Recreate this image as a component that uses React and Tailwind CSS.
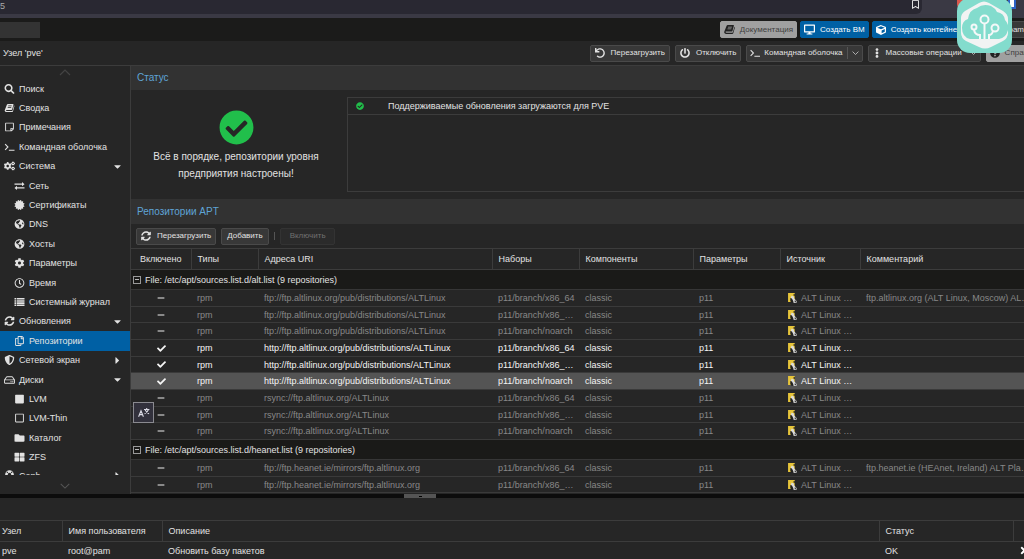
import React from "react";
import {
  FaSearch, FaRegStickyNote, FaCogs, FaCertificate, FaGlobeAmericas, FaCog, FaRegClock,
  FaSyncAlt, FaRegCopy, FaShieldAlt, FaRegHdd, FaSquare, FaRegSquare, FaFolder, FaThLarge,
  FaCheckCircle, FaCheck, FaMinus, FaUndo, FaPowerOff, FaDesktop, FaCube, FaEllipsisV,
  FaCaretDown, FaCaretRight, FaQuestionCircle, FaRegBookmark, FaLifeRing, FaUser, FaTimes,
} from "react-icons/fa";

const Book = ({ className }) => (
  <svg viewBox="0 0 16 16" className={className} width="1em" height="1em" fill="currentColor">
    <path
      fillRule="evenodd"
      d="M5.500 1.500h8q1.200 0 .9 1.200L12.300 10q-.3 1-1.300 1H2.800q-.8.200-.4 1 .3.600 1.200.6H12q.7 0 .9-.6l2.300-8q.8.500.6 1.300L13.600 13q-.4 1.500-1.800 1.500H3Q.8 14.500.3 12.500q-.1-.8.2-1.500L3.800 2.700q.5-1.200 1.700-1.200zM6 4l-.3 1h5.600l.3-1zM5.300 6.500L5 7.500h5.600l.3-1z"
    />
  </svg>
);
const Terminal = ({ className }) => (
  <svg viewBox="0 0 16 16" className={className} width="1em" height="1em" fill="none" stroke="currentColor" strokeWidth="1.700">
    <path d="M1 3.500l4.500 4.500L1 12.500M7 13.200h9" />
  </svg>
);
const Exchange = ({ className }) => (
  <svg viewBox="0 0 16 16" className={className} width="1em" height="1em" fill="currentColor">
    <path d="M0 4h12V1.500l4 3.500-4 3.500V6H0zM16 10H4V7.500L0 11l4 3.500V12h12z" />
  </svg>
);
const ListIcon = ({ className }) => (
  <svg viewBox="0 0 16 16" className={className} width="1em" height="1em" fill="currentColor">
    <path d="M0 1.500h3v2.500H0zM4 1.500h12v2.500H4zM0 5h3v2.500H0zM4 5h12v2.500H4zM0 8.500h3V11H0zM4 8.500h12V11H4zM0 12h3v2.500H0zM4 12h12v2.500H4z" />
  </svg>
);
const Chevron = ({ className, up }) => (
  <svg viewBox="0 0 12 7" className={className} fill="none" stroke="currentColor" strokeWidth="1.200">
    <path d={up ? "M1 6l5-5 5 5" : "M1 1l5 5 5-5"} />
  </svg>
);
const AltLogo = () => (
  <svg viewBox="0 0 16 18" className="h-[10px] w-[9px] shrink-0">
    <path d="M0 0h12v10l-3 6H0z" fill="#e6c43a" />
    <path d="M6 5l4 1 1 4 4 4 1 3-6 1-2-4-3-4z" fill="#dcdcdc" />
    <path d="M4 9l3 1 2 4 1 3-3 1-3-3zM10 2h2v4l-2-1zM12 13l2 1v2h-2z" fill="#222" />
  </svg>
);
const TranslateIcon = () => (
  <svg viewBox="0 0 20 18" className="h-[11px] w-3" fill="none" stroke="#dcdce6" strokeWidth="1.800">
    <path d="M1 16l4-10 4 10M2.500 12.500h5M10 4h9M14.500 1.500V4M17.500 4q-2 5-6.500 7M12 5q2 4 6.500 6" />
  </svg>
);
const CloudLogo = () => (
  <svg viewBox="0 0 55 55" className="absolute -top-[2px] left-[93.500%] size-[55px]">
    <rect width="55" height="55" rx="13" fill="#83dccd" />
    <path d="M22 5q5-3 10 0l14 8q5 3 5 8v14q0 5-5 8l-12 6q-6 3-12 0L9 43q-5-3-5-8V20q0-4 4-7z" fill="#f1f3f3" />
    <path
      d="M13 41q-8-2-8-11 0-7 6-9 1-9 9-11 6-5 14-2 4 2 6 6 7 1 8 8 4 4 3 10-2 8-9 9z"
      fill="#83dccd"
    />
    <g fill="none" stroke="#f4f8f8" strokeWidth="2">
      <circle cx="27.500" cy="21.500" r="4" />
      <circle cx="17" cy="29" r="2.500" />
      <circle cx="38" cy="30" r="3.500" />
      <path d="M27.500 26v15M17 32q1 5 6 5v4M36 33q-1 4-4 4v4" />
    </g>
  </svg>
);

const nav = [
  [FaSearch, "Поиск"],
  [Book, "Сводка"],
  [FaRegStickyNote, "Примечания"],
  [Terminal, "Командная оболочка"],
  [FaCogs, "Система", 0, "down"],
  [Exchange, "Сеть", 1],
  [FaCertificate, "Сертификаты", 1],
  [FaGlobeAmericas, "DNS", 1],
  [FaGlobeAmericas, "Хосты", 1],
  [FaCog, "Параметры", 1],
  [FaRegClock, "Время", 1],
  [ListIcon, "Системный журнал", 1],
  [FaSyncAlt, "Обновления", 0, "down"],
  [FaRegCopy, "Репозитории", 1],
  [FaShieldAlt, "Сетевой экран", 0, "right"],
  [FaRegHdd, "Диски", 0, "down"],
  [FaSquare, "LVM", 1],
  [FaRegSquare, "LVM-Thin", 1],
  [FaFolder, "Каталог", 1],
  [FaThLarge, "ZFS", 1],
];

function NavItem({ item: [Icon, label, child, caret] }) {
  const active = label === "Репозитории";
  return (
    <li className={active ? "bg-[#0060a4]" : ""}>
      <a href="#" className={`flex h-full items-center gap-1 pr-[7px] ${child ? "pl-[14px]" : "pl-1"}`}>
        <Icon className="w-[11px] shrink-0 text-[10px]" />
        <span className="grow">{label}</span>
        {caret === "down" && <FaCaretDown className="text-[11px]" />}
        {caret === "right" && <FaCaretRight className="text-[11px]" />}
      </a>
    </li>
  );
}

const repo = (uri, suite, on, comment, selected) => ({ uri, suite, on, comment, selected });
const dist = "ftp.altlinux.org/pub/distributions/ALTLinux";
const groups = [
  {
    title: "File: /etc/apt/sources.list.d/alt.list (9 repositories)",
    rows: [
      repo(`ftp://${dist}`, "x86_64", false, "ftp.altlinux.org (ALT Linux, Moscow) AL…"),
      repo(`ftp://${dist}`, "x86_…"),
      repo(`ftp://${dist}`, "noarch"),
      repo(`http://${dist}`, "x86_64", true),
      repo(`http://${dist}`, "x86_…", true),
      repo(`http://${dist}`, "noarch", true, "", true),
      repo("rsync://ftp.altlinux.org/ALTLinux", "x86_64"),
      repo("rsync://ftp.altlinux.org/ALTLinux", "x86_…"),
      repo("rsync://ftp.altlinux.org/ALTLinux", "noarch"),
    ],
  },
  {
    title: "File: /etc/apt/sources.list.d/heanet.list (9 repositories)",
    rows: [
      repo("ftp://ftp.heanet.ie/mirrors/ftp.altlinux.org", "x86_64", false, "ftp.heanet.ie (HEAnet, Ireland) ALT Pla…"),
      repo("ftp://ftp.heanet.ie/mirrors/ftp.altlinux.org", "x86_…"),
    ],
  },
];

const btn = "flex h-[17px] shrink-0 items-center whitespace-nowrap rounded-xs border text-[8px]";
const greyTone = "border-[#4a4a4a] bg-[#383838]";
const grey = `${btn} ${greyTone} gap-1 px-[3px]`;
const greyWide = `${btn} ${greyTone} gap-1.5 px-1`;
const blue = `${btn} gap-[5px] border-[#0060a4] bg-[#0060a4] px-[3px] text-white`;
const light = `${btn} gap-[5px] border-[#a0a0a0] bg-[#a0a0a0] px-[3px] text-[#404040]`;
const icon = "text-[10px]";
const cell = "truncate pl-1.5 pr-1";
const th = "truncate border-l border-[#3c3c3c] px-1.5 text-left font-normal first:border-l-0";

function Repositories() {
  return (
    <table className="w-full table-fixed border-collapse">
      <colgroup>
        <col className="w-[60px]" /><col className="w-[67px]" /><col className="w-[234px]" /><col className="w-[87px]" />
        <col className="w-[114px]" /><col className="w-[87px]" /><col className="w-[80px]" /><col />
      </colgroup>
      <thead>
        <tr className="h-[21px] border-y border-[#3c3c3c]">
          {["Включено", "Типы", "Адреса URI", "Наборы", "Компоненты", "Параметры", "Источник", "Комментарий"].map((t) => (
            <th key={t} className={`${th} first:pl-[9px]`}>{t}</th>
          ))}
        </tr>
      </thead>
      {groups.map((g) => (
        <tbody key={g.title}>
          <tr className="h-5 border-b border-[#363636] bg-[#1a1a18]">
            <td colSpan={8}>
              <button className="flex items-center gap-1 pl-[2px]">
                <span className="flex size-2 items-center justify-center border border-[#999]">
                  <span className="h-px w-1 bg-[#bbb]" />
                </span>
                {g.title}
              </button>
            </td>
          </tr>
          {g.rows.map((r, i) => (
            <tr
              key={i}
              className={`h-[17px] border-b border-[#3a3a3a] nth-[3n]:h-4 ${r.selected ? "bg-[#545454]" : ""} ${r.on ? "text-[#f5f5f5]" : "text-[#888]"}`}
            >
              <td>{r.on ? <FaCheck className="mx-auto text-[9px]" /> : <FaMinus className="mx-auto text-[8px] text-[#aaa]" />}</td>
              <td className={cell}>rpm</td>
              <td className={cell}>{r.uri}</td>
              <td className={cell}>p11/branch/{r.suite}</td>
              <td className={cell}>classic</td>
              <td className={cell}>p11</td>
              <td className="pl-2 pr-1">
                <div className="flex items-center gap-1 whitespace-nowrap"><AltLogo />ALT Linux …</div>
              </td>
              <td className="whitespace-nowrap pl-1.5">{r.comment}</td>
            </tr>
          ))}
        </tbody>
      ))}
    </table>
  );
}

export default function App() {
  return (
    <div className="relative flex min-h-screen w-full flex-col overflow-hidden bg-[#262626] font-['Liberation_Sans',sans-serif] text-[9px] leading-3 text-[#e2e2e2]">
      <div className="flex h-[18px] items-start bg-[#3a3944]">
        <div className="flex h-[14px] w-[90%] items-start justify-between rounded-br-md bg-[#292832] pr-[2px] text-[#aaa]">
          <span>5</span>
          <FaRegBookmark className="text-[9px] text-white" />
        </div>
        <div className="flex grow justify-between pl-[35px] pr-2">
          <span className="size-2 rounded-b-sm bg-[#d8574b]" />
          <span className="h-[9px] w-2 border-2 border-t-0 border-[#2d62c4] bg-white" />
        </div>
      </div>
      <header className="flex h-[23px] items-center justify-between bg-[#1b1b1a]">
        <input aria-label="Поиск" className="h-4 w-10 bg-[#333]" />
        <div className="-mr-1 flex gap-[3px]">
          <button className={light}><Book className="text-[11px] text-[#222]" />Документация</button>
          <button className={blue}><FaDesktop className="text-[11px]" />Создать ВМ</button>
          <button className={blue}><FaCube className={icon} />Создать контейнер</button>
          <button className={grey}><FaUser className={icon} />root@pam</button>
        </div>
      </header>
      <div className="flex h-6 items-center justify-between pl-[3px]">
        <h1>Узел 'pve'</h1>
        <div className="-mr-4 flex gap-[5px]">
          <button className={greyWide}><FaUndo className={icon} />Перезагрузить</button>
          <button className={greyWide}><FaPowerOff className={icon} />Отключить</button>
          <button className={grey}>
            <Terminal className={icon} />Командная оболочка
            <span className="h-3 w-px bg-[#555]" />
            <Chevron className="w-[7px]" />
          </button>
          <button className={grey}><FaEllipsisV className={icon} />Массовые операции<Chevron className="ml-1 w-[7px]" /></button>
          <button className={light}><FaQuestionCircle className="text-[10px] text-[#222]" />Справка</button>
        </div>
      </div>
      <main className="flex h-[429px] border-t border-[#3c3c3c]">
        <nav className="flex w-[131px] shrink-0 flex-col items-center border-r border-[#3c3c3c]">
          <Chevron up className="my-[3px] h-[7px] w-3 shrink-0 text-[#444]" />
          <ul className="grid h-[388px] w-full shrink-0 auto-rows-fr">
            {nav.map((n, i) => <NavItem key={i} item={n} />)}
          </ul>
          <a href="#" className="mt-[3px] flex h-[5px] w-full items-start gap-1 overflow-hidden pl-1 pr-[7px]">
            <FaLifeRing className="w-[11px] shrink-0 text-[9px]" /><span className="grow">Ceph</span>
            <FaCaretRight className="text-[11px]" />
          </a>
          <Chevron className="mt-2 h-[6px] w-3 shrink-0 text-[#555]" />
        </nav>
        <div className="flex min-w-0 grow flex-col">
          <h2 className="flex h-6 shrink-0 items-center bg-[#323232] px-1.5 text-[10px] text-[#5fa4d6]">Статус</h2>
          <section className="flex h-[109px] shrink-0 py-[7px]">
            <div className="mr-1.5 flex w-[210px] shrink-0 flex-col items-center px-5 pt-[13px] text-center text-[10px] leading-[17px]">
              <FaCheckCircle className="mb-[3px] size-[35px] shrink-0 text-[#21bf4b]" />
              <p>Всё в порядке, репозитории уровня предприятия настроены!</p>
            </div>
            <div className="grow border border-r-0 border-[#3c3c3c]">
              <div className="flex h-[17px] items-center gap-6 border-b border-[#3c3c3c] pl-2">
                <FaCheckCircle className="text-[8px] text-[#21bf4b]" />
                Поддерживаемые обновления загружаются для PVE
              </div>
            </div>
          </section>
          <h2 className="flex h-[25px] shrink-0 items-center bg-[#323232] px-1.5 text-[10px] text-[#5fa4d6]">Репозитории APT</h2>
          <div className="flex h-6 shrink-0 items-center gap-[5px] pl-[5px]">
            <button className={greyWide}><FaSyncAlt className={icon} />Перезагрузить</button>
            <button className={`${btn} ${greyTone} px-[5px]`}>Добавить</button>
            <span className="h-2 w-px bg-[#555]" />
            <button disabled className={`${btn} border-[#333] bg-[#2b2b2b] px-2 pl-[9px] text-[#707070]`}>Включить</button>
          </div>
          <Repositories />
        </div>
      </main>
      <div className="flex h-1 justify-center bg-[#0c0c0c] pr-[184px]">
        <button aria-label="Свернуть" className="flex h-full w-8 items-center justify-center bg-[#555]">
          <span className="h-px w-[3px] bg-black" />
        </button>
      </div>
      <table className="mt-[22px] w-full table-fixed border-collapse">
        <colgroup><col className="w-[62px]" /><col className="w-[100px]" /><col /><col className="w-[134px]" /><col className="w-[11px]" /></colgroup>
        <thead>
          <tr className="h-[21px] border-y border-[#3c3c3c]">
            <th className={`${th} first:pl-0.5`}>Узел</th><th className={th}>Имя пользователя</th><th className={th}>Описание</th><th className={th}>Статус</th><th className={th} />
          </tr>
        </thead>
        <tbody>
          <tr className="h-[18px]">
            <td className="pl-0.5">pve</td><td className={cell}>root@pam</td><td className={cell}>Обновить базу пакетов</td><td className={cell}>OK</td>
            <td className="overflow-hidden pl-[6px]"><FaTimes className="text-[11px] text-white" /></td>
          </tr>
        </tbody>
      </table>
      <button aria-label="Перевести" className="absolute left-[133px] top-[402px] flex size-[21px] items-center justify-center border border-[#8a8a90] bg-[#32313c]">
        <TranslateIcon />
      </button>
      <CloudLogo />
    </div>
  );
}
